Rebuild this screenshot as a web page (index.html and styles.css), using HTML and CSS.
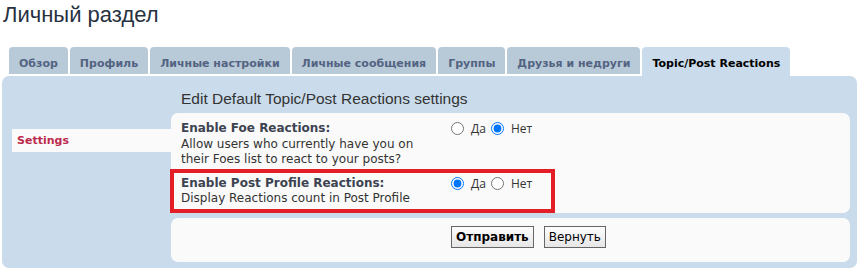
FILE: index.html
```html
<!DOCTYPE html>
<html lang="ru">

<head>
    <meta charset="UTF-8">
    <meta name="viewport" content="width=device-width, initial-scale=1.0">
    <title>Личный раздел</title>
    <link rel="stylesheet" href="styles.css">
</head>

<body>
    <h2 class="page-title">Личный раздел</h2>

    <ul class="tabs">
        <li class="tab">Обзор</li>
        <li class="tab">Профиль</li>
        <li class="tab">Личные настройки</li>
        <li class="tab">Личные сообщения</li>
        <li class="tab">Группы</li>
        <li class="tab">Друзья и недруги</li>
        <li class="tab active">Topic/Post Reactions</li>
    </ul>

    <div class="panel">
        <ul class="side-menu">
            <li class="current">Settings</li>
        </ul>

        <div class="main">
            <h3>Edit Default Topic/Post Reactions settings</h3>

            <div class="inner">
                <dl class="row">
                    <dt>
                        <label class="opt-name">Enable Foe Reactions:</label>
                        <span class="explain">Allow users who currently have you on their Foes list to react to your posts?</span>
                    </dt>
                    <dd>
                        <label class="choice"><input type="radio" name="foe"> Да</label>
                        <label class="choice"><input type="radio" name="foe" checked> Нет</label>
                    </dd>
                </dl>
                <dl class="row marked">
                    <dt>
                        <label class="opt-name">Enable Post Profile Reactions:</label>
                        <span class="explain">Display Reactions count in Post Profile</span>
                    </dt>
                    <dd>
                        <label class="choice"><input type="radio" name="profile" checked> Да</label>
                        <label class="choice"><input type="radio" name="profile"> Нет</label>
                    </dd>
                </dl>
            </div>

            <div class="inner submit-buttons">
                <button class="button1">Отправить</button>
                <button class="button2">Вернуть</button>
            </div>
        </div>
    </div>
</body>

</html>
```

FILE: styles.css
```css
body {
    margin: 0;
    padding: 0 3px 0 2px;
    font-family: "DejaVu Sans", Verdana, sans-serif;
    font-size: 11px;
    color: #333;
}

.page-title {
    margin: 0 0 17px 1px;
    font-family: "Liberation Sans", Arial, sans-serif;
    font-weight: normal;
    font-size: 22px;
    line-height: 30px;
    color: #28313f;
}

.tabs {
    display: flex;
    gap: 2px;
    margin: 0 0 2px;
    padding: 0 0 0 7px;
    list-style: none;
}

.tab {
    padding: 9px 10px 3px;
    line-height: 15px;
    font-weight: bold;
    color: #536482;
    background-color: #b8c9d7;
    border-radius: 4px 4px 0 0;
}

.tab.active {
    color: #000;
    background-color: #cadceb;
    padding-bottom: 6px;
    margin-bottom: -3px;
}

.panel {
    display: grid;
    grid-template-columns: 159px 1fr;
    padding: 14px 7px 6px 10px;
    background-color: #cadceb;
    border-radius: 7px;
}

.side-menu {
    margin: 39px 0 0;
    padding: 0;
    list-style: none;
}

.side-menu li {
    padding-left: 5px;
    line-height: 23px;
    font-weight: bold;
    color: #bc2a4d;
    background-color: #fafafa;
}

.main h3 {
    margin: 0 0 5px 10px;
    font-family: "Liberation Sans", Arial, sans-serif;
    font-weight: normal;
    font-size: 15.5px;
    line-height: 18px;
    color: #333;
}

.inner {
    background-color: #fafafa;
    border-radius: 7px;
    padding: 4px 0 2px;
}

.row {
    position: relative;
    display: flex;
    margin: 0;
    padding: 4px 10px;
    font-size: 12px;
    line-height: 15.5px;
}

.row dt {
    width: 263px;
    margin-right: 7px;
}

.row dd {
    display: flex;
    gap: 5px;
    margin: 0;
    height: 15.5px;
    align-items: center;
}

.opt-name {
    display: block;
    font-weight: bold;
    color: #3d4351;
}

.explain {
    display: block;
}

.choice {
    display: inline-flex;
    align-items: center;
    gap: 7px;
    font-family: "Open Sans", sans-serif;
    font-size: 12px;
    color: #333;
}

.choice input {
    width: 13px;
    height: 13px;
    margin: 0;
}

.marked::after {
    content: "";
    position: absolute;
    top: -3px;
    left: -1px;
    width: 377px;
    bottom: -2px;
    border: 4px solid #e31e26;
}

.submit-buttons {
    margin-top: 5px;
    padding: 8px 0 14px 280px;
    display: flex;
    gap: 10px;
}

.submit-buttons button {
    height: 22px;
    padding: 0 4px;
    font-family: "DejaVu Sans", Verdana, sans-serif;
    font-size: 12px;
    color: #000;
    border: 1px solid #666;
    background: linear-gradient(#fdfdfd, #e6e6e6);
    border-radius: 0;
}

.button1 {
    font-weight: bold;
}

.button2 {
    padding: 0 3px;
    font-size: 11.5px;
}
```
